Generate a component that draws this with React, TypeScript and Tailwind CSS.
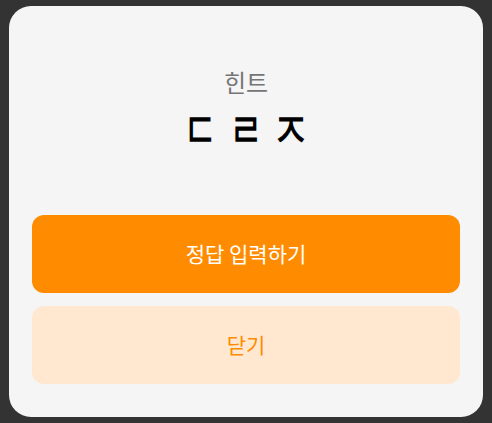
export default function App() {
  return (
    <div
      className="w-[492px] h-[423px] bg-[#333333] px-[9px] pt-[6px] pb-[6px]"
      style={{ fontFamily: '"Noto Sans CJK KR", "Noto Sans", sans-serif' }}
    >
      <div className="h-[411px] rounded-[22px] bg-[#f5f5f5] px-[23px] pt-[60px] flex flex-col">
        <div className="text-center text-[24px] leading-[32px] text-[#757575]">힌트</div>
        <div className="mt-[14px] h-[36px] flex items-center justify-center">
          <span
            className="inline-block text-[34px] leading-[36px] font-semibold text-black tracking-[1px] pl-[1px] scale-y-[1.45]"
            style={{ fontFamily: 'sans-serif' }}
          >
            ㄷ ㄹ ㅈ
          </span>
        </div>
        <div className="mt-[67px] flex flex-col gap-[13px]">
          <button className="h-[78px] w-full rounded-[12px] bg-[#ff8c00] text-white text-[21px] font-normal">
            정답 입력하기
          </button>
          <button className="h-[78px] w-full rounded-[12px] bg-[#ffe8cf] text-[#ff8c00] text-[21px] font-normal">
            닫기
          </button>
        </div>
      </div>
    </div>
  );
}
